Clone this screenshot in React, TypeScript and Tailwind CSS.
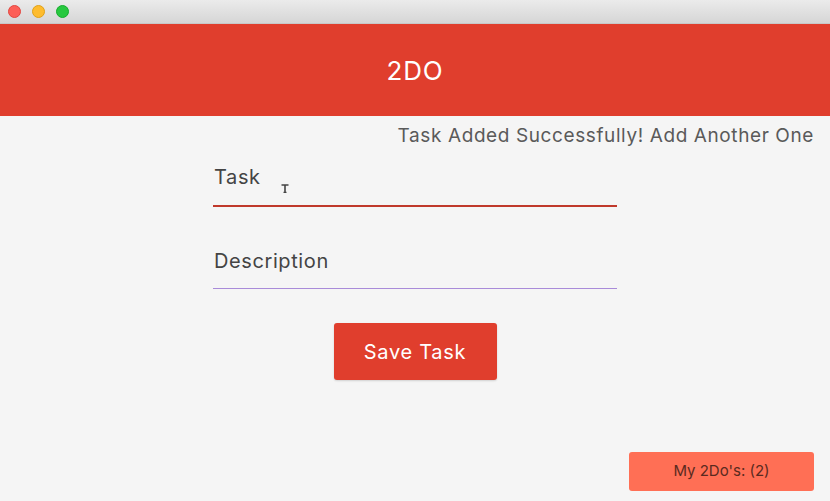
import React from "react";

export default function App() {
  return (
    <div className="w-[830px] h-[501px] flex flex-col bg-[#f5f5f5] overflow-hidden" style={{ fontFamily: "Inter, Roboto, 'Noto Sans', sans-serif" }}>
      <div className="h-[24px] flex items-center gap-[11px] pl-[8px] bg-gradient-to-b from-[#ebebeb] to-[#d6d6d6] border-b border-[#c8c8c8]">
        <div className="w-[13px] h-[13px] rounded-full bg-[#fd5f57] border border-[#e2463f]" />
        <div className="w-[13px] h-[13px] rounded-full bg-[#febc2e] border border-[#e1a116]" />
        <div className="w-[13px] h-[13px] rounded-full bg-[#28c840] border border-[#14ad2b]" />
      </div>
      <div className="h-[92px] bg-[#e03e2d] flex items-center justify-center">
        <span className="text-white text-[26px] tracking-[0.8px] leading-none mt-[2px]">2DO</span>
      </div>
      <div className="flex justify-end pr-[16px] pt-[8px]">
        <span className="text-[#5a5a5a] text-[19px] tracking-[0.6px] leading-[24px]">Task Added Successfully! Add Another One</span>
      </div>
      <div className="flex flex-col items-center">
        <div className="w-[404px] mt-[17px] relative">
          <div className="text-[#444] text-[20px] tracking-[0.6px] leading-[24px] pl-[1px] h-[40px]">Task</div>
          <svg className="absolute left-[68px] top-[19px]" width="8" height="9" viewBox="0 0 8 9">
            <path d="M0.5 1 H7.5 M4 1 V8.5 M2.5 8.5 H5.5" stroke="#444" strokeWidth="1.6" fill="none" />
          </svg>
          <div className="h-[2px] bg-[#c0392b]" />
        </div>
        <div className="w-[404px] mt-[42px]">
          <div className="text-[#444] text-[20px] tracking-[0.6px] leading-[24px] pl-[1px] h-[39px]">Description</div>
          <div className="h-[1px] bg-[#a98bd9]" />
        </div>
        <button className="mt-[34px] w-[163px] h-[57px] rounded-[3px] bg-[#e03e2d] text-white text-[20px] tracking-[0.7px] shadow-[0_1px_2px_rgba(0,0,0,0.15)]">
          Save Task
        </button>
      </div>
      <div className="flex-1 flex items-end justify-end pr-[16px] pb-[10px]">
        <button className="w-[185px] h-[39px] rounded-[3px] bg-[#ff6f55] text-[#5a2a20] text-[15px]">
          My 2Do's: (2)
        </button>
      </div>
    </div>
  );
}
